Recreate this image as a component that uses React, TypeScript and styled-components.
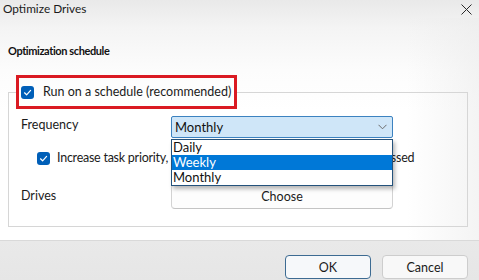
import React from "react";
import styled, { createGlobalStyle } from "styled-components";

const GlobalStyle = createGlobalStyle`
  html, body {
    margin: 0;
    padding: 0;
    width: 479px;
    height: 280px;
    overflow: hidden;
    background: #ffffff;
  }
  * {
    box-sizing: border-box;
  }
`;

const FONT = `"Segoe UI", Lato, "Noto Sans", sans-serif`;

const Window = styled.div`
  width: 479px;
  height: 280px;
  display: flex;
  flex-direction: column;
  font-family: ${FONT};
  font-size: 12.5px;
  color: #1b1b1b;
  background: linear-gradient(180deg, #e9e9e9 0px, #f4f4f4 28px, #fcfcfc 70px, #ffffff 110px);
`;

const TitleBar = styled.div`
  height: 20px;
  display: flex;
  align-items: center;
  justify-content: space-between;
  padding: 0 5px 0 3px;
`;

const Title = styled.span`
  font-size: 11.8px;
  line-height: 16px;
  color: #1a1a1a;
`;

const CloseButton = styled.button`
  width: 16px;
  height: 16px;
  padding: 0;
  border: none;
  background: transparent;
  display: flex;
  align-items: center;
  justify-content: center;
`;

const Content = styled.div`
  flex: 1;
  padding: 25px 11px 13px 8px;
  border-bottom: 1px solid #d9d9d9;
  background: linear-gradient(90deg, rgba(255, 255, 255, 0) 0, rgba(255, 255, 255, 0) 85%, rgba(236, 236, 236, 0.6) 100%);
`;

const Heading = styled.h2`
  margin: 0 0 16px 0;
  font-size: 11px;
  letter-spacing: -0.4px;
  line-height: 16px;
  font-weight: 700;
  color: #111;
`;

const Group = styled.fieldset`
  margin: 0;
  padding: 0;
  border: 1px solid #d6d6d6;
  min-width: 0;
`;

const Legend = styled.legend`
  margin-left: 7px;
  padding: 6px 3px 6px 2px;
  border: 3px solid #da1a22;
  display: flex;
  align-items: center;
  gap: 9px;
  line-height: 13px;
`;

const Box = styled.span`
  width: 13px;
  height: 13px;
  border-radius: 3px;
  background: #005fb8;
  display: inline-flex;
  align-items: center;
  justify-content: center;
  flex-shrink: 0;
`;

const LabelText = styled.span<{ $tight?: boolean }>`
  font-size: 12.5px;
  line-height: 16px;
  white-space: nowrap;
  letter-spacing: ${(p) => (p.$tight ? "-0.25px" : "normal")};
`;

const Body = styled.div`
  padding: 7px 0 17px 12px;
  display: flex;
  flex-direction: column;
`;

const Row = styled.div<{ $mt?: number }>`
  display: grid;
  grid-template-columns: 150px 222px;
  align-items: start;
  margin-top: ${(p) => p.$mt ?? 0}px;
`;

const FieldLabel = styled.span<{ $pt?: number }>`
  line-height: 16px;
  padding-top: ${(p) => p.$pt ?? 0}px;
`;

const CheckRow = styled.div<{ $mt?: number }>`
  display: flex;
  align-items: center;
  gap: 7px;
  padding-left: 16px;
  height: 22px;
  margin-top: ${(p) => p.$mt ?? 0}px;
  white-space: nowrap;
`;

const SelectWrap = styled.div`
  position: relative;
  z-index: 2;
`;

const Select = styled.div`
  height: 22px;
  border: 1px solid #3c82c0;
  border-radius: 2px;
  background: #cfe6f8;
  display: flex;
  align-items: center;
  justify-content: space-between;
  padding: 0 5px 0 3px;
  font-size: 13px;
  color: #111;
`;

const Options = styled.ul`
  position: absolute;
  top: 100%;
  left: 0;
  right: 0;
  margin: 1px 0 0 0;
  padding: 0;
  list-style: none;
  background: #ffffff;
  border: 1px solid #24527c;
  box-shadow: 2px 3px 4px rgba(0, 0, 0, 0.28);
`;

const Option = styled.li<{ $active?: boolean }>`
  height: 15px;
  line-height: 15px;
  padding-left: 1px;
  font-size: 13px;
  background: ${(p) => (p.$active ? "#0078d7" : "transparent")};
  color: ${(p) => (p.$active ? "#ffffff" : "#111")};
`;

const ChooseButton = styled.button`
  height: 25px;
  width: 222px;
  border: 1px solid #d3d3d3;
  border-bottom-color: #c4c4c4;
  border-radius: 4px;
  background: #fdfdfd;
  font-family: ${FONT};
  font-size: 12.5px;
  color: #1b1b1b;
`;

const Footer = styled.div`
  height: 41px;
  display: flex;
  justify-content: flex-end;
  align-items: flex-start;
  gap: 11px;
  padding: 14px 11px 0 0;
  background: linear-gradient(180deg, #e9e9e9 0, #e6e6e6 100%);
`;

const DialogButton = styled.button<{ $primary?: boolean }>`
  width: 86px;
  height: 24px;
  border-radius: 4px;
  border: 1px solid ${(p) => (p.$primary ? "#3d6b92" : "#cdcdcd")};
  background: ${(p) => (p.$primary ? "#f6f8fa" : "#f8f8f8")};
  font-family: ${FONT};
  font-size: 12.5px;
  color: #1b1b1b;
  padding: 0;
`;

const Check = () => (
  <Box>
    <svg width="9" height="9" viewBox="0 0 9 9">
      <path d="M1.5 4.8 L3.6 6.8 L7.6 2.4" fill="none" stroke="#fff" strokeWidth="1.2" strokeLinecap="round" strokeLinejoin="round" />
    </svg>
  </Box>
);

export default function App() {
  return (
    <>
      <GlobalStyle />
      <Window>
        <TitleBar>
          <Title>Optimize Drives</Title>
          <CloseButton aria-label="Close">
            <svg width="11" height="11" viewBox="0 0 11 11">
              <path d="M0.5 0.5 L10.5 10.5 M10.5 0.5 L0.5 10.5" stroke="#2a2a2a" strokeWidth="1" />
            </svg>
          </CloseButton>
        </TitleBar>
        <Content>
          <Heading>Optimization schedule</Heading>
          <Group>
            <Legend>
              <Check />
              <LabelText>Run on a schedule (recommended)</LabelText>
            </Legend>
            <Body>
              <Row>
                <FieldLabel $pt={1}>Frequency</FieldLabel>
                <SelectWrap>
                  <Select>
                    <span>Monthly</span>
                    <svg width="9" height="6" viewBox="0 0 9 6">
                      <path d="M0.5 0.8 L4.5 4.8 L8.5 0.8" fill="none" stroke="#6b6b6b" strokeWidth="1" />
                    </svg>
                  </Select>
                  <Options>
                    <Option>Daily</Option>
                    <Option $active>Weekly</Option>
                    <Option>Monthly</Option>
                  </Options>
                </SelectWrap>
              </Row>
              <CheckRow $mt={9}>
                <Check />
                <LabelText $tight>Increase task priority, if three consecutive scheduled runs are missed</LabelText>
              </CheckRow>
              <Row $mt={15}>
                <FieldLabel $pt={4}>Drives</FieldLabel>
                <ChooseButton>Choose</ChooseButton>
              </Row>
            </Body>
          </Group>
        </Content>
        <Footer>
          <DialogButton $primary>OK</DialogButton>
          <DialogButton>Cancel</DialogButton>
        </Footer>
      </Window>
    </>
  );
}
